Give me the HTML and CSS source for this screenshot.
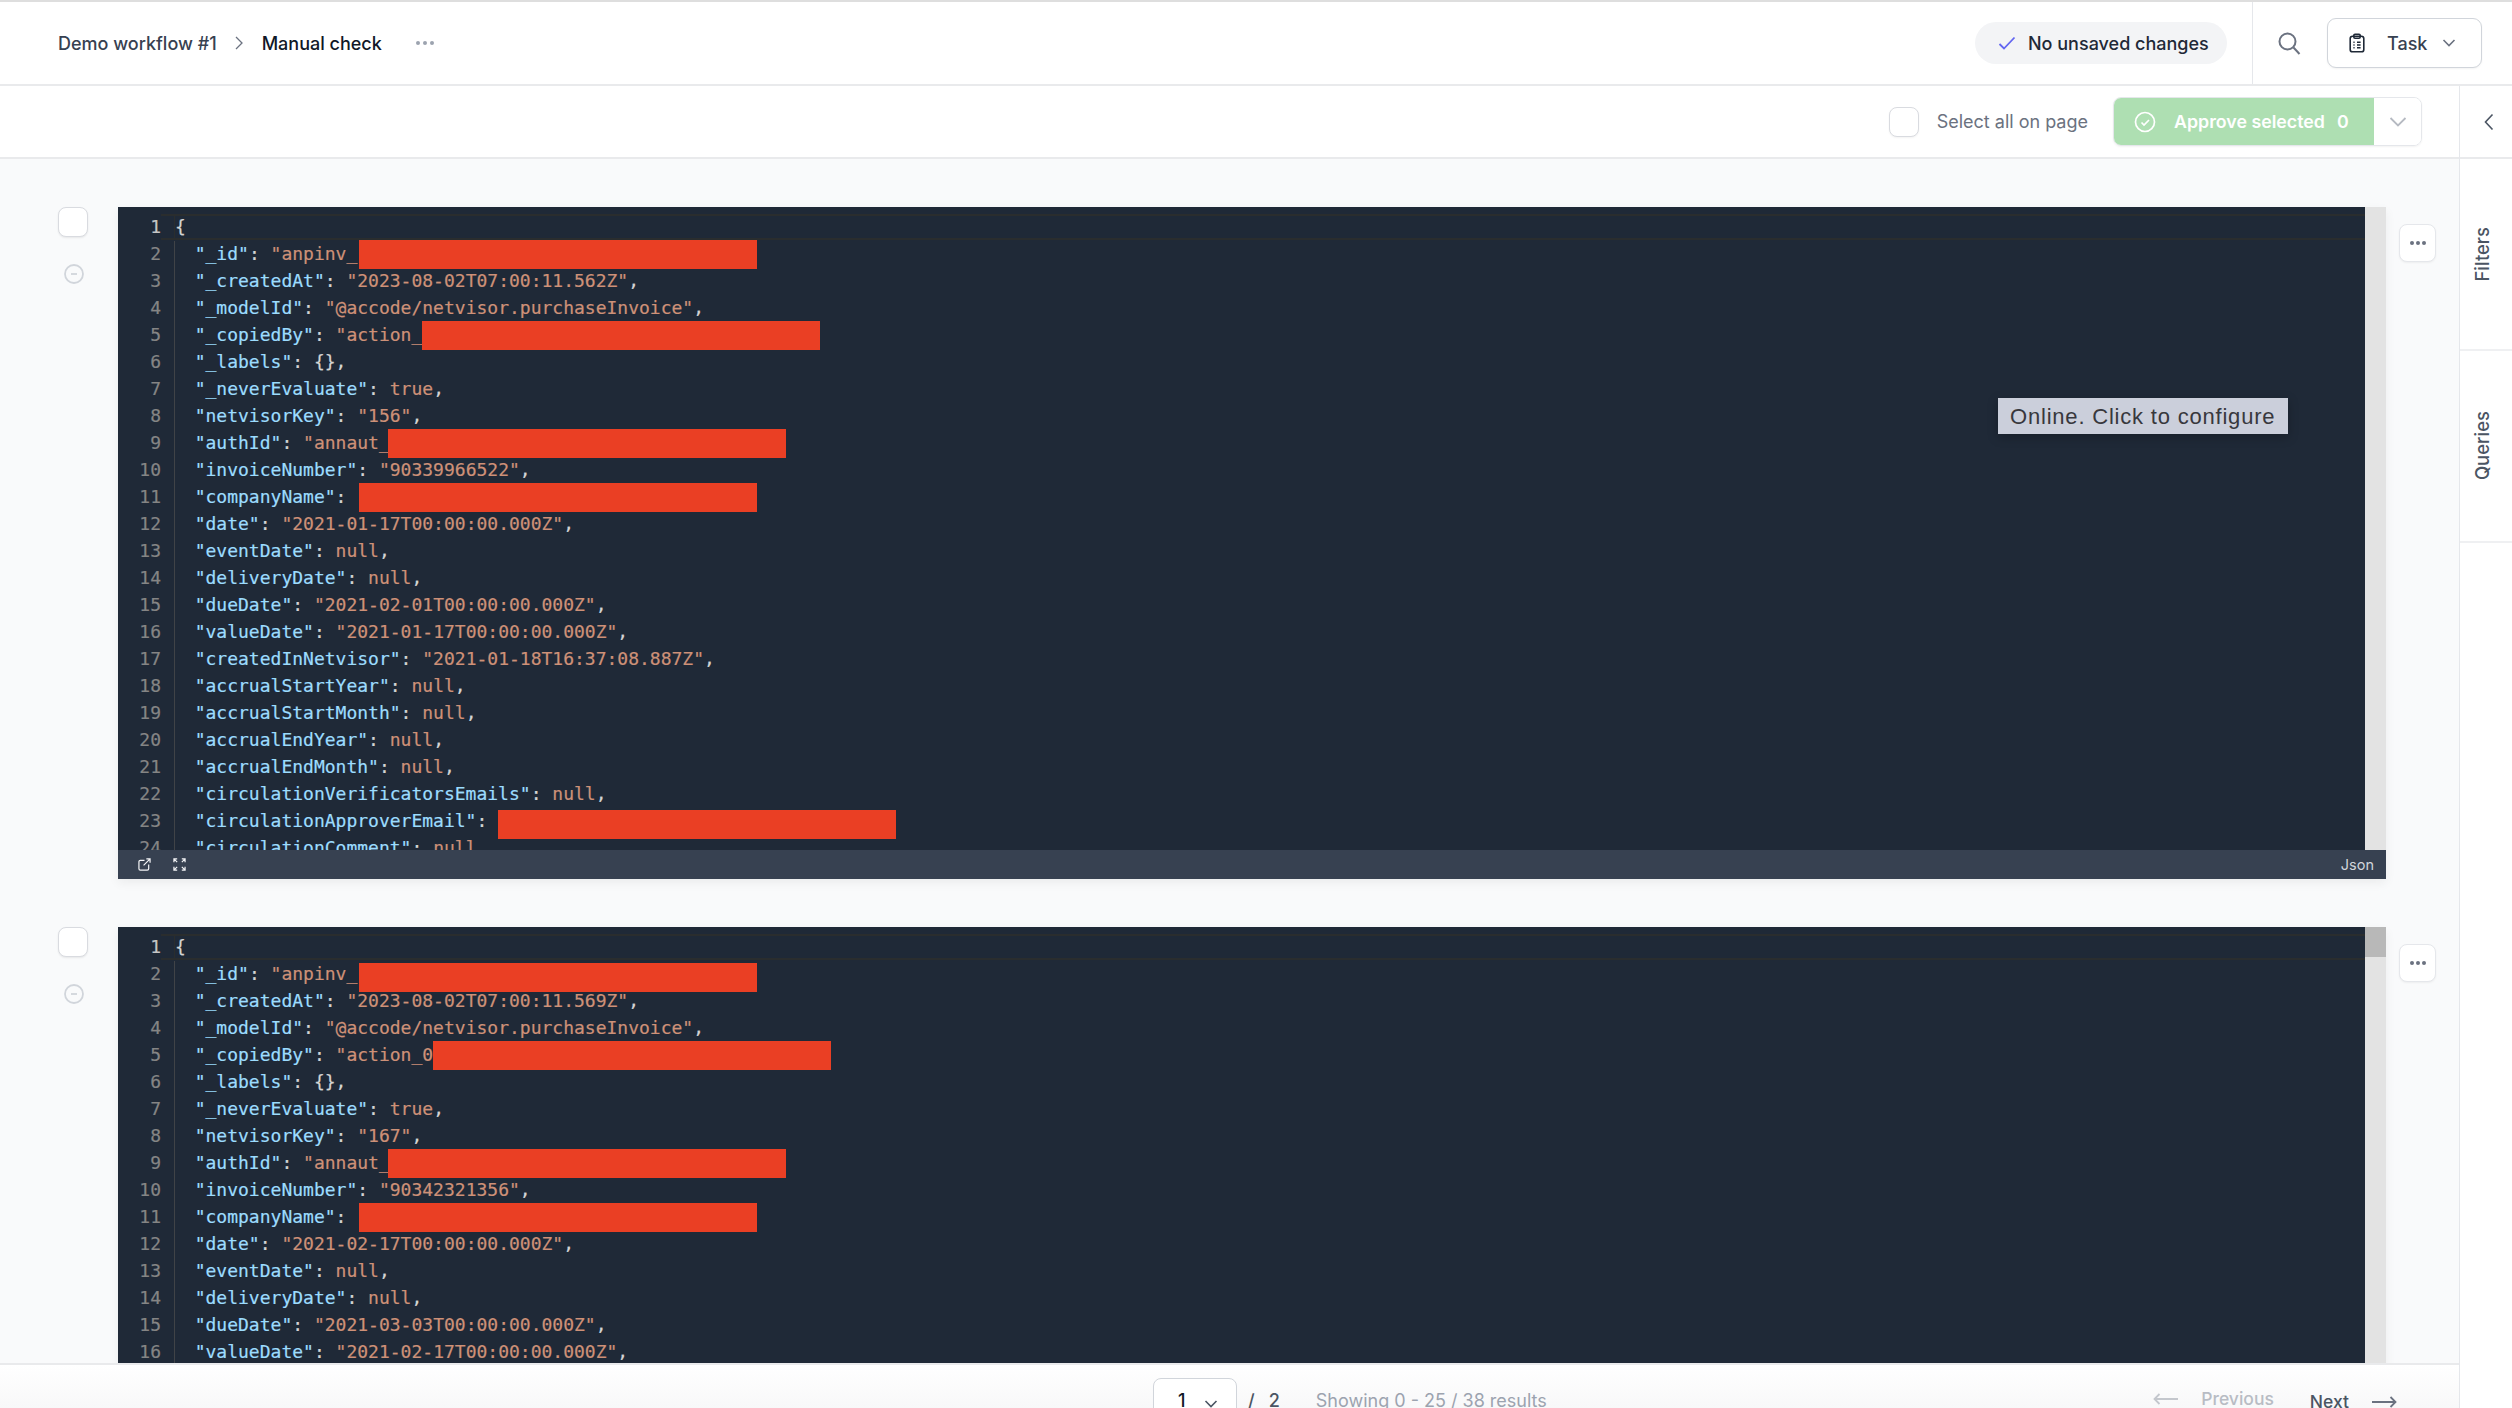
FILE: index.html
```html
<!DOCTYPE html>
<html lang="en">
<head>
<meta charset="utf-8">
<title>Manual check</title>
<link rel="stylesheet" href="styles.css">
</head>
<body>
<div class="app">
  <header class="header">
    <nav class="crumbs">
      <span class="crumb">Demo workflow #1</span>
      <svg class="crumb-sep" viewBox="0 0 10 16"><path d="M2 2l6 6-6 6"/></svg>
      <span class="crumb current">Manual check</span>
      <svg class="crumb-more" viewBox="0 0 20 6"><circle cx="3" cy="3" r="2"/><circle cx="10" cy="3" r="2"/><circle cx="17" cy="3" r="2"/></svg>
    </nav>
    <div class="saved">
      <svg class="saved-check" viewBox="0 0 18 14"><path d="M1.5 8l4.5 4.5L16.5 1.5"/></svg>
      <span>No unsaved changes</span>
    </div>
    <div class="header-tools">
      <svg class="search" viewBox="0 0 24 24"><circle cx="10.5" cy="10.5" r="8"/><path d="M16.5 16.5l6 6.5"/></svg>
      <button class="task">
        <svg class="clip" viewBox="0 0 20 24"><rect x="1.5" y="3.5" width="17" height="19.5" rx="3"/><rect x="6" y="1" width="8" height="5" rx="1.5"/><path d="M5.5 11h1.5M10 11h4.5M5.5 14.5h1.5M10 14.5h4.5M5.5 18h1.5M10 18h4.5"/></svg>
        <span>Task</span>
        <svg class="chev" viewBox="0 0 14 8"><path d="M1.5 1l5.5 5.5L12.5 1"/></svg>
      </button>
    </div>
  </header>
  <div class="body">
    <div class="main">
      <div class="toolbar">
        <span class="box"></span>
        <span class="select-all">Select all on page</span>
        <div class="approve">
          <div class="approve-main">
            <svg class="approve-icon" viewBox="0 0 22 22"><circle cx="11" cy="11" r="9.5"/><path d="M7.5 11.5l2.5 2.5 5-5"/></svg>
            <span>Approve selected</span>
            <span class="approve-count">0</span>
          </div>
          <div class="approve-menu">
            <svg viewBox="0 0 18 10"><path d="M1.5 1l7.5 7.5L16.5 1"/></svg>
          </div>
        </div>
      </div>
      <div class="content">
        <article class="item">
          <div class="item-side">
            <span class="box"></span>
            <svg class="minus" viewBox="0 0 20 20"><circle cx="10" cy="10" r="9"/><path d="M7 10h6"/></svg>
          </div>
          <div class="editor">
            <div class="editor-main">
              <div class="code">
<div class="ln first"><span class="num">1</span><span class="src"><span class="p">{</span></span></div>
<div class="ln"><span class="num">2</span><span class="src">  <span class="k">"_id"</span><span class="p">:</span> <span class="s">"anpinv_</span><span class="red r"></span></span></div>
<div class="ln"><span class="num">3</span><span class="src">  <span class="k">"_createdAt"</span><span class="p">:</span> <span class="s">"2023-08-02T07:00:11.562Z"</span><span class="p">,</span></span></div>
<div class="ln"><span class="num">4</span><span class="src">  <span class="k">"_modelId"</span><span class="p">:</span> <span class="s">"@accode/netvisor.purchaseInvoice"</span><span class="p">,</span></span></div>
<div class="ln"><span class="num">5</span><span class="src">  <span class="k">"_copiedBy"</span><span class="p">:</span> <span class="s">"action_</span><span class="red"></span></span></div>
<div class="ln"><span class="num">6</span><span class="src">  <span class="k">"_labels"</span><span class="p">: {},</span></span></div>
<div class="ln"><span class="num">7</span><span class="src">  <span class="k">"_neverEvaluate"</span><span class="p">:</span> <span class="s">true</span><span class="p">,</span></span></div>
<div class="ln"><span class="num">8</span><span class="src">  <span class="k">"netvisorKey"</span><span class="p">:</span> <span class="s">"156"</span><span class="p">,</span></span></div>
<div class="ln"><span class="num">9</span><span class="src">  <span class="k">"authId"</span><span class="p">:</span> <span class="s">"annaut_</span><span class="red l"></span></span></div>
<div class="ln"><span class="num">10</span><span class="src">  <span class="k">"invoiceNumber"</span><span class="p">:</span> <span class="s">"90339966522"</span><span class="p">,</span></span></div>
<div class="ln"><span class="num">11</span><span class="src">  <span class="k">"companyName"</span><span class="p">:</span> <span class="red r"></span></span></div>
<div class="ln"><span class="num">12</span><span class="src">  <span class="k">"date"</span><span class="p">:</span> <span class="s">"2021-01-17T00:00:00.000Z"</span><span class="p">,</span></span></div>
<div class="ln"><span class="num">13</span><span class="src">  <span class="k">"eventDate"</span><span class="p">:</span> <span class="s">null</span><span class="p">,</span></span></div>
<div class="ln"><span class="num">14</span><span class="src">  <span class="k">"deliveryDate"</span><span class="p">:</span> <span class="s">null</span><span class="p">,</span></span></div>
<div class="ln"><span class="num">15</span><span class="src">  <span class="k">"dueDate"</span><span class="p">:</span> <span class="s">"2021-02-01T00:00:00.000Z"</span><span class="p">,</span></span></div>
<div class="ln"><span class="num">16</span><span class="src">  <span class="k">"valueDate"</span><span class="p">:</span> <span class="s">"2021-01-17T00:00:00.000Z"</span><span class="p">,</span></span></div>
<div class="ln"><span class="num">17</span><span class="src">  <span class="k">"createdInNetvisor"</span><span class="p">:</span> <span class="s">"2021-01-18T16:37:08.887Z"</span><span class="p">,</span></span></div>
<div class="ln"><span class="num">18</span><span class="src">  <span class="k">"accrualStartYear"</span><span class="p">:</span> <span class="s">null</span><span class="p">,</span></span></div>
<div class="ln"><span class="num">19</span><span class="src">  <span class="k">"accrualStartMonth"</span><span class="p">:</span> <span class="s">null</span><span class="p">,</span></span></div>
<div class="ln"><span class="num">20</span><span class="src">  <span class="k">"accrualEndYear"</span><span class="p">:</span> <span class="s">null</span><span class="p">,</span></span></div>
<div class="ln"><span class="num">21</span><span class="src">  <span class="k">"accrualEndMonth"</span><span class="p">:</span> <span class="s">null</span><span class="p">,</span></span></div>
<div class="ln"><span class="num">22</span><span class="src">  <span class="k">"circulationVerificatorsEmails"</span><span class="p">:</span> <span class="s">null</span><span class="p">,</span></span></div>
<div class="ln"><span class="num">23</span><span class="src">  <span class="k">"circulationApproverEmail"</span><span class="p">:</span> <span class="red low"></span></span></div>
<div class="ln"><span class="num">24</span><span class="src">  <span class="k">"circulationComment"</span><span class="p">:</span> <span class="s">null</span><span class="p">,</span></span></div>
              </div>
              <div class="scrollbar"></div>
            </div>
            <div class="status">
              <svg class="st-icon" viewBox="0 0 14 14"><path d="M7 2.500H2.500a1.500 1.500 0 0 0-1.500 1.500v7.500A1.500 1.500 0 0 0 2.500 13H10a1.500 1.500 0 0 0 1.500-1.500V7M6 8l7-7M9 1h4v4"/></svg>
              <svg class="st-icon" viewBox="0 0 14 14"><path d="M1 4.500V1h3.500M9.500 1H13v3.500M13 9.500V13H9.500M4.500 13H1V9.500M1.500 1.500l3 3M12.500 1.500l-3 3M12.500 12.500l-3-3M1.500 12.500l3-3"/></svg>
              <span class="lang">Json</span>
            </div>
          </div>
          <button class="more"><svg viewBox="0 0 18 6"><circle cx="3" cy="3" r="2"/><circle cx="9" cy="3" r="2"/><circle cx="15" cy="3" r="2"/></svg></button>
        </article>
        <article class="item">
          <div class="item-side">
            <span class="box"></span>
            <svg class="minus" viewBox="0 0 20 20"><circle cx="10" cy="10" r="9"/><path d="M7 10h6"/></svg>
          </div>
          <div class="editor">
            <div class="editor-main">
              <div class="code">
<div class="ln first"><span class="num">1</span><span class="src"><span class="p">{</span></span></div>
<div class="ln"><span class="num">2</span><span class="src">  <span class="k">"_id"</span><span class="p">:</span> <span class="s">"anpinv_</span><span class="red low r"></span></span></div>
<div class="ln"><span class="num">3</span><span class="src">  <span class="k">"_createdAt"</span><span class="p">:</span> <span class="s">"2023-08-02T07:00:11.569Z"</span><span class="p">,</span></span></div>
<div class="ln"><span class="num">4</span><span class="src">  <span class="k">"_modelId"</span><span class="p">:</span> <span class="s">"@accode/netvisor.purchaseInvoice"</span><span class="p">,</span></span></div>
<div class="ln"><span class="num">5</span><span class="src">  <span class="k">"_copiedBy"</span><span class="p">:</span> <span class="s">"action_0</span><span class="red"></span></span></div>
<div class="ln"><span class="num">6</span><span class="src">  <span class="k">"_labels"</span><span class="p">: {},</span></span></div>
<div class="ln"><span class="num">7</span><span class="src">  <span class="k">"_neverEvaluate"</span><span class="p">:</span> <span class="s">true</span><span class="p">,</span></span></div>
<div class="ln"><span class="num">8</span><span class="src">  <span class="k">"netvisorKey"</span><span class="p">:</span> <span class="s">"167"</span><span class="p">,</span></span></div>
<div class="ln"><span class="num">9</span><span class="src">  <span class="k">"authId"</span><span class="p">:</span> <span class="s">"annaut_</span><span class="red l"></span></span></div>
<div class="ln"><span class="num">10</span><span class="src">  <span class="k">"invoiceNumber"</span><span class="p">:</span> <span class="s">"90342321356"</span><span class="p">,</span></span></div>
<div class="ln"><span class="num">11</span><span class="src">  <span class="k">"companyName"</span><span class="p">:</span> <span class="red r"></span></span></div>
<div class="ln"><span class="num">12</span><span class="src">  <span class="k">"date"</span><span class="p">:</span> <span class="s">"2021-02-17T00:00:00.000Z"</span><span class="p">,</span></span></div>
<div class="ln"><span class="num">13</span><span class="src">  <span class="k">"eventDate"</span><span class="p">:</span> <span class="s">null</span><span class="p">,</span></span></div>
<div class="ln"><span class="num">14</span><span class="src">  <span class="k">"deliveryDate"</span><span class="p">:</span> <span class="s">null</span><span class="p">,</span></span></div>
<div class="ln"><span class="num">15</span><span class="src">  <span class="k">"dueDate"</span><span class="p">:</span> <span class="s">"2021-03-03T00:00:00.000Z"</span><span class="p">,</span></span></div>
<div class="ln"><span class="num">16</span><span class="src">  <span class="k">"valueDate"</span><span class="p">:</span> <span class="s">"2021-02-17T00:00:00.000Z"</span><span class="p">,</span></span></div>
              </div>
              <div class="scrollbar"><div class="thumb"></div></div>
            </div>
          </div>
          <button class="more"><svg viewBox="0 0 18 6"><circle cx="3" cy="3" r="2"/><circle cx="9" cy="3" r="2"/><circle cx="15" cy="3" r="2"/></svg></button>
        </article>
      </div>
      <footer class="footer">
        <div class="pager-left">
          <div class="page-select">
            <span>1</span>
            <svg viewBox="0 0 14 8"><path d="M1.500 1l5.500 5.500L12.500 1"/></svg>
          </div>
          <span class="of">/</span>
          <span class="of">2</span>
          <span class="showing">Showing 0 - 25 / 38 results</span>
        </div>
        <div class="pager-right">
          <span class="pg prev"><svg viewBox="0 0 26 12"><path d="M25 6H1.500M6.500 1l-5 5 5 5"/></svg>Previous</span>
          <span class="pg next">Next<svg viewBox="0 0 26 12"><path d="M1 6h23.500M19.500 1l5 5-5 5"/></svg></span>
        </div>
      </footer>
    </div>
    <aside class="sidebar">
      <div class="side-toggle"><svg viewBox="0 0 10 18"><path d="M8.500 1.500L1.500 9l7 7.500"/></svg></div>
      <div class="side-tab"><span>Filters</span></div>
      <div class="side-tab"><span>Queries</span></div>
    </aside>
  </div>
  <div class="tooltip">Online. Click to configure</div>
</div>
</body>
</html>
```
FILE: styles.css
```css
* { box-sizing: border-box; }
html, body { margin: 0; padding: 0; height: 100%; }
body { font-family: Inter, "Liberation Sans", sans-serif; background: #fff; overflow: hidden; }
svg { display: block; fill: none; }
button { font: inherit; padding: 0; cursor: pointer; }

.app { position: relative; width: 2512px; height: 1408px; display: flex; flex-direction: column; border-top: 2px solid #dedede; overflow: hidden; }

.header { height: 84px; flex: none; display: flex; align-items: center; border-bottom: 2px solid #e9eaec; padding-left: 58px; }
.crumbs { display: flex; align-items: center; flex: 1; }
.crumb { font-size: 18px; font-weight: 500; color: #374151; }
.crumb.current { color: #111827; }
.crumb-sep { width: 10px; height: 16px; margin: 0 18px 0 17px; stroke: #6b7280; stroke-width: 1.3; }
.crumb-more { width: 20px; height: 6px; margin-left: 33px; fill: #9ca3af; }
.saved { width: 252px; height: 42px; border-radius: 21px; background: #f3f4f6; display: flex; align-items: center; padding-left: 23px; gap: 12px; font-size: 18px; font-weight: 500; color: #1f2937; margin-right: 25px; }
.saved-check { width: 18px; height: 14px; stroke: #6366f1; stroke-width: 1.8; }
.header-tools { height: 82px; width: 260px; border-left: 1px solid #e5e7eb; display: flex; align-items: center; padding-left: 24px; }
.search { width: 24px; height: 24px; stroke: #6b7280; stroke-width: 2; margin-right: 26px; }
.task { width: 155px; height: 50px; background: #fff; border: 1.5px solid #d1d5db; border-radius: 9px; display: flex; align-items: center; padding-left: 21px; font-size: 18px; font-weight: 500; color: #374151; box-shadow: 0 1px 2px rgba(0,0,0,.05); }
.clip { width: 16px; height: 20px; stroke: #1f2937; stroke-width: 2; margin-right: 22px; }
.chev { width: 14px; height: 8px; margin-left: 15px; stroke: #6b7280; stroke-width: 1.600; }

.body { flex: 1; min-height: 0; display: flex; }
.main { flex: 1; min-width: 0; display: flex; flex-direction: column; }

.toolbar { height: 73px; flex: none; background: #fff; border-bottom: 2px solid #e9eaec; display: flex; align-items: center; justify-content: flex-end; padding-right: 37px; }
.box { display: block; width: 30px; height: 30px; border: 1.500px solid #d9dbe0; border-radius: 8px; background: #fff; box-shadow: 0 1px 2px rgba(0,0,0,.05); flex: none; }
.select-all { font-size: 18px; color: #6b7280; margin: 0 25px 0 18px; }
.approve { width: 309px; height: 49px; display: flex; border: 1px solid #e5e7eb; border-radius: 8px; overflow: hidden; box-shadow: 0 1px 2px rgba(0,0,0,.05); }
.approve-main { width: 260px; background: #aedfb2; color: #fff; display: flex; align-items: center; padding-left: 20px; font-size: 17.8px; font-weight: 600; }
.approve-icon { width: 22px; height: 22px; stroke: #fff; stroke-width: 1.700; margin-right: 18px; }
.approve-count { margin-left: 12px; }
.approve-menu { flex: 1; display: flex; align-items: center; justify-content: center; background: #fff; }
.approve-menu svg { width: 18px; height: 10px; stroke: #b6bac2; stroke-width: 1.800; }

.content { flex: 1; min-height: 0; overflow: hidden; background: #f9fafb; padding: 48px 0 0 58px; }
.item { display: flex; align-items: flex-start; height: 672px; margin-bottom: 48px; }
.item-side { width: 60px; flex: none; display: flex; flex-direction: column; }
.item-side .box { box-shadow: 0 1px 2px rgba(0,0,0,.08); }
.minus { width: 20px; height: 20px; margin: 27px 0 0 6px; stroke: #d1d5db; stroke-width: 1.800; }
.editor { width: 2268px; height: 672px; flex: none; background: #1f2937; display: flex; flex-direction: column; box-shadow: 0 4px 10px rgba(0,0,0,.06); }
.editor-main { flex: 1; min-height: 0; display: flex; }
.code { flex: 1; min-width: 0; padding-top: 7px; overflow: hidden; font-family: "DejaVu Sans Mono", monospace; font-size: 18px; line-height: 25px; -webkit-text-stroke: .2px; }
.ln { display: flex; height: 27px; white-space: pre; }
.num { width: 43px; margin-right: 14px; flex: none; text-align: right; color: #858585; }
.src { flex: 1; border-left: 1px solid #404347; color: #d4d4d4; margin-left: -1px; text-indent: -2px; }
.first { box-shadow: inset 0 2px 0 #2a2d2e, inset 0 -2px 0 #2a2d2e; height: 26px; margin-bottom: 1px; }
.first .num { color: #c6c6c6; background: #1f2937; }
.first .src { border-left-color: #2a2d2e; text-indent: 0; }
.k { color: #9cdcfe; }
.s { color: #ce9178; }
.p { color: #d4d4d4; }
.red { display: inline-block; width: 398px; height: 29px; margin: -1px 0; vertical-align: top; background: #ea3f24; }
.red.low { margin: 2px 0 -4px; }
.red.r { margin-left: 2px; }
.red.l { margin-left: -2px; }
.scrollbar { width: 21px; flex: none; background: #e3e3e3; }
.thumb { height: 30px; background: #b8b8b8; }
.status { height: 29px; flex: none; background: #374151; display: flex; align-items: center; padding: 0 24px 0 20px; gap: 22px; }
.st-icon { width: 13px; height: 13px; stroke: #f3f4f6; stroke-width: 1.300; }
.lang { margin-left: auto; margin-right: -12px; font-size: 14.500px; color: #d1d5db; }
.more { margin-left: 13px; margin-top: 17px; width: 37px; height: 38px; background: #fff; border: 1.500px solid #e5e7eb; border-radius: 8px; display: flex; align-items: center; justify-content: center; box-shadow: 0 1px 2px rgba(0,0,0,.05); }
.more svg { width: 18px; height: 6px; fill: #6b7280; }

.footer { height: 45px; flex: none; background: linear-gradient(#fff, #f8f8f9); border-top: 2px solid #e9eaec; display: flex; justify-content: space-between; overflow: hidden; padding: 13px 62px 0 1153px; font-size: 18px; }
.pager-left { display: flex; align-items: flex-start; }
.page-select { width: 84px; height: 50px; border: 1.500px solid #d1d5db; border-radius: 8px; background: #fff; display: flex; align-items: flex-start; padding: 11px 0 0 24px; color: #111827; font-weight: 500; }
.page-select svg { width: 14px; height: 8px; margin: 10px 0 0 19px; stroke: #4b5563; stroke-width: 1.600; }
.of { margin: 12px 0 0 11px; color: #4b5563; font-weight: 500; }
.of + .of { margin-left: 14px; }
.showing { margin: 12px 0 0 36px; color: #9ca3af; }
.pager-right { display: flex; align-items: flex-start; gap: 36px; }
.pg { display: flex; align-items: center; gap: 22px; font-weight: 500; font-size: 17.500px; }
.prev { color: #b8bcc4; margin-top: 10px; }
.prev svg { width: 26px; height: 12px; stroke: #c4c7cd; stroke-width: 1.800; }
.next { color: #4b5563; margin-top: 13px; }
.next svg { width: 26px; height: 12px; stroke: #6b7280; stroke-width: 1.800; }

.sidebar { width: 53px; flex: none; background: #fff; border-left: 1px solid #e5e7eb; display: flex; flex-direction: column; }
.side-toggle { height: 73px; flex: none; border-bottom: 2px solid #e9eaec; display: flex; align-items: center; justify-content: flex-end; padding-right: 18px; }
.side-toggle svg { width: 10px; height: 18px; stroke: #4b5563; stroke-width: 1.600; }
.side-tab { height: 192px; flex: none; border-bottom: 2px solid #eff0f2; display: flex; align-items: center; justify-content: center; padding-right: 8px; }
.side-tab span { writing-mode: vertical-rl; transform: rotate(180deg); font-size: 18.500px; font-weight: 500; color: #4b5563; }

.tooltip { position: absolute; left: 1998px; top: 396px; width: 290px; height: 36px; background: #cbcfdb; color: #38383d; font-family: "Liberation Sans", sans-serif; font-size: 22px; line-height: 38px; padding-left: 12px; white-space: nowrap; letter-spacing: .8px; box-shadow: 0 3px 10px rgba(0,0,0,.25); }
```
